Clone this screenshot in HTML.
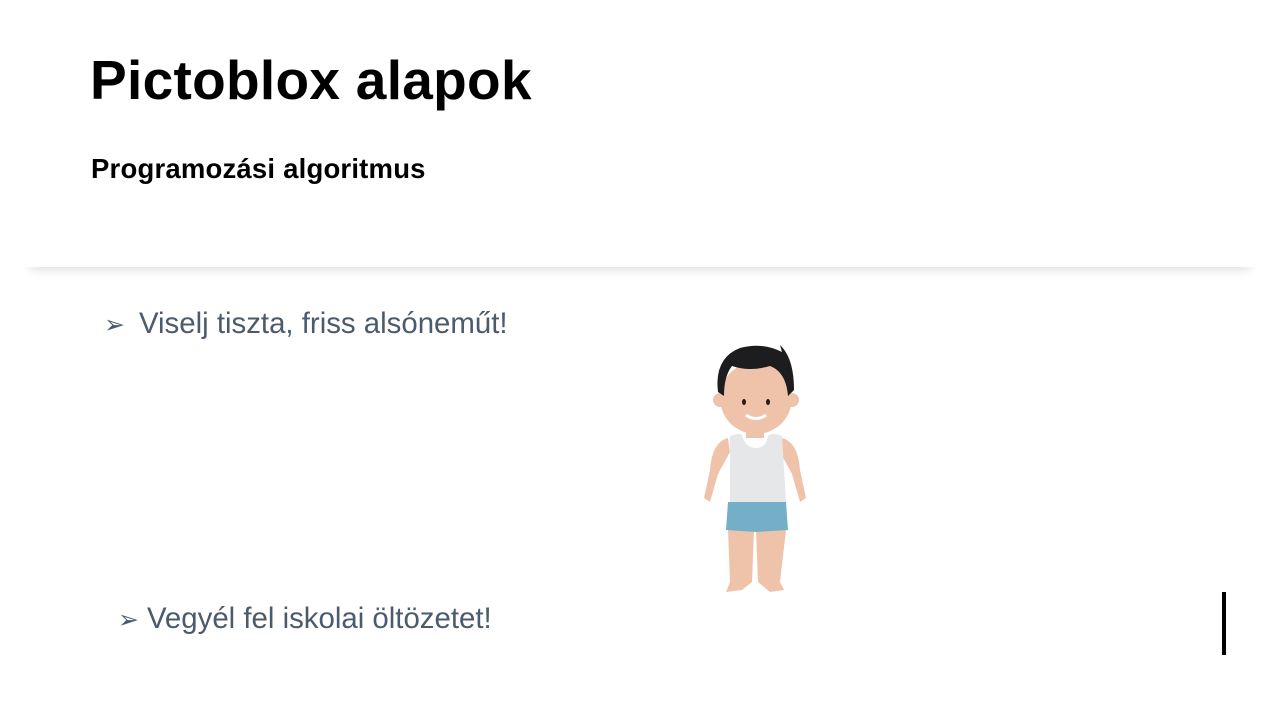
<!DOCTYPE html>
<html><head><meta charset="utf-8"><style>
html,body{margin:0;padding:0;width:1280px;height:720px;background:#fff;overflow:hidden;position:relative;font-family:"Liberation Sans",sans-serif}
.hdr{position:absolute;left:30px;top:0;width:1220px;height:267px;background:#fff;box-shadow:0 4px 8px rgba(0,0,0,0.10);}
.cover{position:absolute;left:0;top:0;width:1280px;height:267px;background:#fff}
.t{position:absolute;left:90px;top:48px;font-size:55px;font-weight:bold;color:#000;letter-spacing:0.3px}
.s{position:absolute;left:91px;top:153px;font-size:27.5px;font-weight:bold;color:#000;letter-spacing:0.2px}
.b{position:absolute;color:#4b5a6c;font-size:29.4px;white-space:nowrap}
.bar{position:absolute;left:1222px;top:592px;width:4px;height:63px;background:#000}
</style></head><body>
<div class="hdr"></div>
<div class="cover"></div>
<div class="t">Pictoblox alapok</div>
<div class="s">Programozási algoritmus</div>
<div class="b" style="left:104px;top:307px"><span style="font-size:25px;margin-right:14px">➢</span>Viselj tiszta, friss alsóneműt!</div>
<div class="b" style="left:118px;top:602px"><span style="font-size:25px;margin-right:8px">➢</span>Vegyél fel iskolai öltözetet!</div>
<svg style="position:absolute;left:690px;top:340px" width="130" height="260" viewBox="0 0 130 260">
 <g fill="#efc3aa">
  <path d="M38 98 Q22 102 20 130 L14 158 L20 162 L28 134 L40 112 Z"/>
  <path d="M92 98 Q108 102 110 130 L116 158 L110 162 L102 134 L90 112 Z"/>
  <path d="M38 190 L64 190 L62 242 L52 250 L36 252 L40 242 Z"/>
  <path d="M66 190 L96 190 L90 242 L94 250 L80 252 L68 242 Z"/>
  <rect x="56" y="78" width="18" height="20"/>
  <circle cx="30" cy="60" r="7"/><circle cx="102" cy="60" r="7"/>
  <ellipse cx="66" cy="58" rx="36" ry="36"/>
 </g>
 <path d="M28 52 Q24 18 50 8 Q72 2 92 12 L90 5 Q104 18 104 50 L98 56 Q96 32 80 26 Q60 32 42 26 Q34 36 34 56 Z" fill="#1d1d1f"/>
 <ellipse cx="54" cy="62" rx="2" ry="3" fill="#2a1a14"/><ellipse cx="78" cy="62" rx="2" ry="3" fill="#2a1a14"/>
 <path d="M56 75 Q66 82 76 75" stroke="#fff" stroke-width="3" fill="none"/>
 <path d="M40 96 Q52 92 52 96 Q56 108 66 108 Q76 108 78 96 Q82 92 92 96 L96 162 L40 162 Z" fill="#e6e7e9"/>
 <path d="M38 162 L96 162 L98 190 L66 192 L36 190 Z" fill="#74afc8"/>
</svg>
<div class="bar"></div>
</body></html>
